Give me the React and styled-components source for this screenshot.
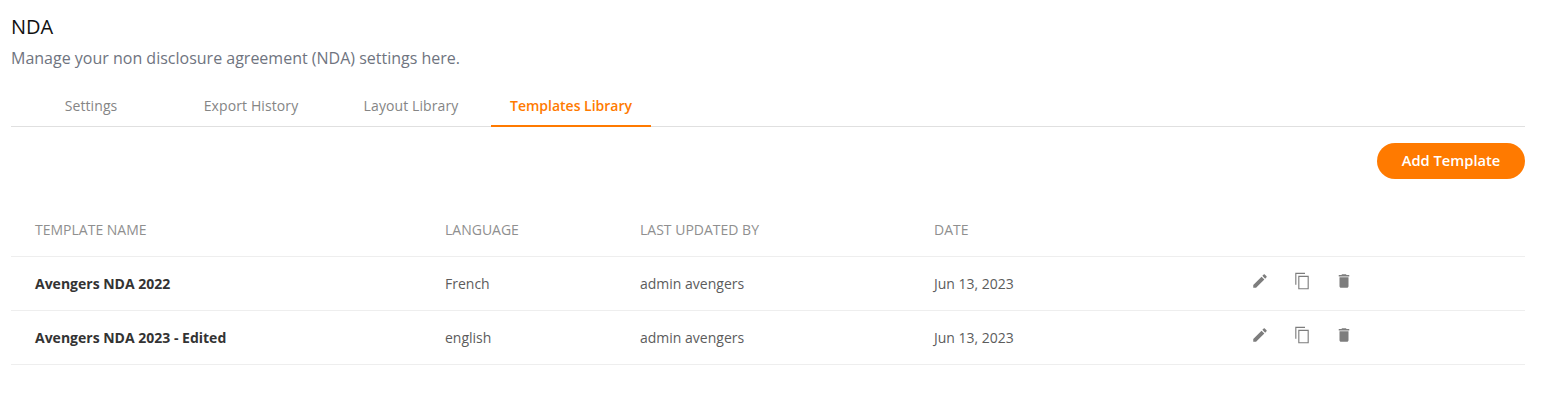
import React from "react";
import styled, { createGlobalStyle } from "styled-components";

const GlobalStyle = createGlobalStyle`
  body {
    margin: 0;
    background: #fff;
    font-family: "Open Sans", "Liberation Sans", sans-serif;
  }
`;

const Page = styled.div`
  padding: 15px 21px 0 11px;
`;

const Title = styled.h1`
  margin: 0;
  font-size: 20px;
  line-height: 24px;
  font-weight: 400;
  color: #111;
`;

const Subtitle = styled.p`
  margin: 7px 0 0;
  font-size: 16px;
  line-height: 24px;
  color: #6f7480;
`;

const Tabs = styled.div`
  display: flex;
  margin-top: 17px;
  border-bottom: 1px solid #e0e0e0;
`;

const Tab = styled.div`
  width: 160px;
  height: 40px;
  margin-bottom: -1px;
  box-sizing: border-box;
  display: flex;
  justify-content: center;
  align-items: center;
  padding-bottom: 2px;
  font-size: 14px;
  letter-spacing: ${({ $active }) => ($active ? "0" : "0.1px")};
  font-weight: ${({ $active }) => ($active ? 600 : 400)};
  color: ${({ $active }) => ($active ? "#ff7a00" : "#858585")};
  border-bottom: 2px solid ${({ $active }) => ($active ? "#ff7a00" : "transparent")};
`;

const Toolbar = styled.div`
  display: flex;
  justify-content: flex-end;
  margin-top: 16px;
`;

const AddButton = styled.button`
  width: 148px;
  height: 36px;
  padding: 0 0 2px;
  border: 0;
  border-radius: 18px;
  background: #ff7a00;
  color: #fff;
  font-family: inherit;
  font-size: 14.7px;
  font-weight: 600;
`;

const Row = styled.div`
  display: grid;
  grid-template-columns: 410px 195px 294px 317px 1fr;
  align-items: center;
  height: ${({ $head }) => ($head ? "77px" : "53px")};
  padding-left: 24px;
  border-bottom: 1px solid #eeeeee;
`;

const HeadCell = styled.div`
  font-size: 14px;
  color: #8f8f8f;
  padding-top: 24px;
`;

const Cell = styled.div`
  font-size: 14px;
  color: #5c5c5c;
  font-weight: ${({ $bold }) => ($bold ? 700 : 400)};
  ${({ $bold }) => $bold && "color: #333;"}
`;

const Actions = styled.div`
  display: flex;
  gap: 24px;
  margin-top: -5px;
`;

const IconBox = styled.svg`
  width: 18px;
  height: 18px;
  fill: #7d7d7d;
  display: block;
`;

const EditIcon = () => (
  <IconBox viewBox="0 0 24 24">
    <path d="M3 17.25V21h3.75L17.81 9.94l-3.75-3.75L3 17.25zM20.71 7.04c.39-.39.39-1.02 0-1.41l-2.34-2.34c-.39-.39-1.02-.39-1.41 0l-1.83 1.83 3.75 3.75 1.83-1.83z" />
  </IconBox>
);

const CopyIcon = () => (
  <IconBox viewBox="0 0 24 24">
    <path d="M3 1h13v1.5H4.5V17H3V1zm4 4h14v18H7V5zm1.5 1.5v15h11v-15h-11z" />
  </IconBox>
);

const DeleteIcon = () => (
  <IconBox viewBox="0 0 24 24">
    <path d="M6 19c0 1.1.9 2 2 2h8c1.1 0 2-.9 2-2V7H6v12zM19 4h-3.5l-1-1h-5l-1 1H5v2h14V4z" />
  </IconBox>
);

const tabs = ["Settings", "Export History", "Layout Library", "Templates Library"];

const templates = [
  { name: "Avengers NDA 2022", language: "French" },
  { name: "Avengers NDA 2023 - Edited", language: "english" },
];

const App = () => {
  return (
    <Page>
      <GlobalStyle />
      <Title>NDA</Title>
      <Subtitle>Manage your non disclosure agreement (NDA) settings here.</Subtitle>
      <Tabs>
        {tabs.map((tab) => (
          <Tab key={tab} $active={tab === "Templates Library"}>
            {tab}
          </Tab>
        ))}
      </Tabs>
      <Toolbar>
        <AddButton>Add Template</AddButton>
      </Toolbar>
      <Row $head>
        <HeadCell>TEMPLATE NAME</HeadCell>
        <HeadCell>LANGUAGE</HeadCell>
        <HeadCell>LAST UPDATED BY</HeadCell>
        <HeadCell>DATE</HeadCell>
        <HeadCell />
      </Row>
      {templates.map((item) => (
        <Row key={item.name}>
          <Cell $bold>{item.name}</Cell>
          <Cell>{item.language}</Cell>
          <Cell>admin avengers</Cell>
          <Cell>Jun 13, 2023</Cell>
          <Actions>
            <EditIcon />
            <CopyIcon />
            <DeleteIcon />
          </Actions>
        </Row>
      ))}
    </Page>
  );
};

export default App;
